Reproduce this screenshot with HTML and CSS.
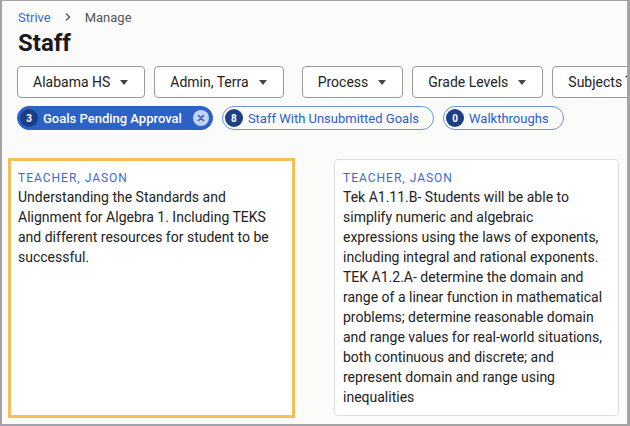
FILE: index.html
```html
<!DOCTYPE html>
<html lang="en">
<head>
  <meta charset="UTF-8" />
  <title>Staff - Strive</title>
  <link rel="stylesheet" href="styles.css">
</head>
<body>
  <div class="page">

    <header class="top">
      <nav class="crumbs">
        <a href="#" class="crumb-link">Strive</a>
        <svg class="crumb-sep" viewBox="0 0 8 10" aria-hidden="true">
          <path d="M2 1.5 L5.5 5 L2 8.5" fill="none" stroke="#666" stroke-width="1.6"/>
        </svg>
        <span class="crumb-current">Manage</span>
      </nav>
      <h1>Staff</h1>

      <div class="filters">
        <button class="dropdown">Alabama HS <span class="caret"></span></button>
        <button class="dropdown">Admin, Terra <span class="caret"></span></button>
        <button class="dropdown dropdown-split">Process <span class="caret"></span></button>
        <button class="dropdown">Grade Levels <span class="caret"></span></button>
        <button class="dropdown">Subjects Taught <span class="caret"></span></button>
      </div>

      <div class="chips">
        <span class="chip chip-active">
          <span class="count">3</span>
          Goals Pending Approval
          <span class="chip-close">
            <svg viewBox="0 0 10 10" aria-hidden="true">
              <path d="M2.5 2.5 L7.5 7.5 M7.5 2.5 L2.5 7.5" stroke="#2a5bb8" stroke-width="1.6" stroke-linecap="round"/>
            </svg>
          </span>
        </span>
        <span class="chip">
          <span class="count">8</span>
          Staff With Unsubmitted Goals
        </span>
        <span class="chip">
          <span class="count">0</span>
          Walkthroughs
        </span>
      </div>
    </header>

    <section class="cards">
      <article class="card card-selected">
        <div class="card-name">Teacher, Jason</div>
        <p class="card-text">Understanding the Standards and Alignment for Algebra 1. Including TEKS and different resources for student to be successful.</p>
      </article>
      <article class="card">
        <div class="card-name">Teacher, Jason</div>
        <p class="card-text">Tek A1.11.B- Students will be able to simplify numeric and algebraic expressions using the laws of exponents, including integral and rational exponents. TEK A1.2.A- determine the domain and range of a linear function in mathematical problems; determine reasonable domain and range values for real-world situations, both continuous and discrete; and represent domain and range using inequalities</p>
      </article>
    </section>

  </div>
</body>
</html>
```

FILE: styles.css
```css
/* Base */
html, body {
  margin: 0;
  padding: 0;
  height: 100%;
  overflow: hidden;
  background: #a3a3a3;
  font-family: Roboto, "Noto Sans", sans-serif;
  color: #222;
}

/* Cadre gris autour de la page */
.page {
  margin: 1px 3px 2px 2px;
  height: 423px;
  background: #fbfbfa;
  overflow: hidden;
  box-sizing: border-box;
  padding-top: 6px;
}

.top {
  padding: 0 0 0 15px;
}

/* Fil d'ariane */
.crumbs {
  display: flex;
  align-items: center;
  height: 20px;
  font-size: 13px;
  padding-left: 1px;
}
.crumb-link {
  color: #3a6cd0;
  text-decoration: none;
}
.crumb-sep {
  width: 8px;
  height: 10px;
  margin: 0 13px 0 13px;
}
.crumb-current {
  color: #555;
}

h1 {
  margin: 1px 0 0 1px;
  font-size: 24px;
  line-height: 30px;
  font-weight: 700;
  color: #1a1a1a;
}

/* Filtres */
.filters {
  display: flex;
  gap: 9px;
  margin-top: 8px;
  white-space: nowrap;
}
.dropdown {
  flex: none;
  display: flex;
  align-items: center;
  gap: 10px;
  height: 32px;
  padding: 0 16px 0 15px;
  border: 1px solid #9a9a9a;
  border-radius: 4px;
  background: #fff;
  font-family: inherit;
  font-size: 14px;
  color: #222;
}
.dropdown-split {
  margin-left: 9px;
}
.caret {
  width: 0;
  height: 0;
  border-left: 4.5px solid transparent;
  border-right: 4.5px solid transparent;
  border-top: 5px solid #444;
}

/* Pastilles */
.chips {
  display: flex;
  gap: 9px;
  margin-top: 8px;
}
.chip {
  display: flex;
  align-items: center;
  gap: 5px;
  height: 24px;
  box-sizing: border-box;
  padding: 0 14px 0 2px;
  border: 1px solid #6c95dc;
  border-radius: 12px;
  color: #2b62c6;
  font-size: 13px;
  white-space: nowrap;
}
.count {
  display: inline-flex;
  justify-content: center;
  align-items: center;
  width: 18px;
  height: 18px;
  border-radius: 50%;
  background: #1d3f86;
  color: #fff;
  font-size: 10px;
  font-weight: 700;
}
.chip-active {
  background: #2c62c8;
  border-color: #2c62c8;
  color: #fff;
  font-weight: 500;
  padding-right: 3px;
}
.chip-active .count {
  background: #1b3d85;
}
.chip-close {
  display: inline-flex;
  justify-content: center;
  align-items: center;
  width: 16px;
  height: 16px;
  margin-left: 6px;
  border-radius: 50%;
  background: #c3d3f1;
}
.chip-close svg {
  width: 10px;
  height: 10px;
}

/* Cartes */
.cards {
  display: grid;
  grid-template-columns: 287px 285px;
  column-gap: 39px;
  padding-left: 6px;
  margin-top: 29px;
}
.card {
  background: #fff;
  border: 1px solid #dedede;
  border-radius: 4px;
  padding: 9px 8px 8px 8px;
}
.card-selected {
  border: 3px solid #f2c05a;
  border-radius: 0;
  padding: 8px 7px;
  margin: -1px 0 -2px 0;
}
.card-name {
  font-size: 12px;
  line-height: 18px;
  letter-spacing: 1px;
  text-transform: uppercase;
  color: #3a6cd0;
}
.card-text {
  margin: 0;
  font-size: 14px;
  line-height: 20px;
  color: #222;
}
```
